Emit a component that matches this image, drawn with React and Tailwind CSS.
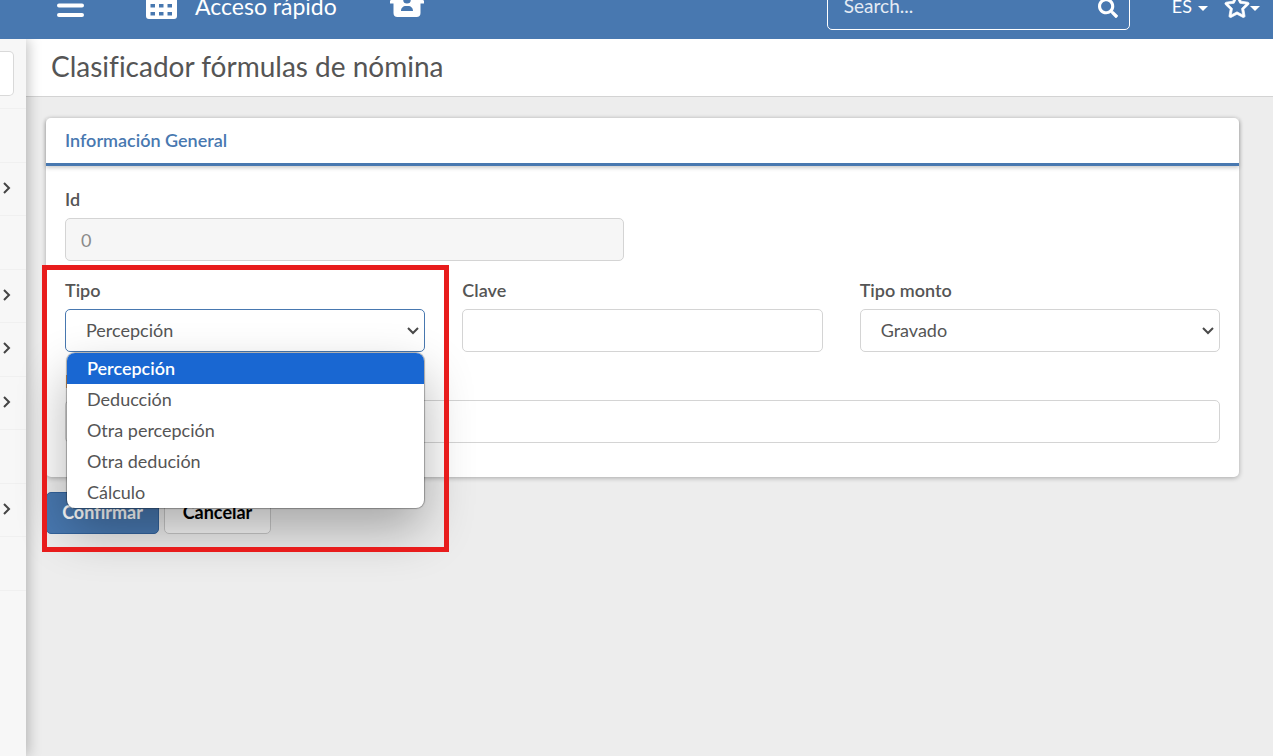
import React from "react";
import { FaSearch, FaRegStar } from "react-icons/fa";

const menuRows = [false, true, false, true, true, true, false, true, false, false];
const tipos = ["Percepción", "Deducción", "Otra percepción", "Otra dedución", "Cálculo"];

const label = "mb-[7px] block text-[18px] leading-6 font-semibold text-[#555]";
const field = "block h-[43px] w-full rounded-[5px] border bg-white text-[18px] text-[#555] outline-none";

function Chevron({ className }) {
  return (
    <svg viewBox="0 0 12 8" className={className} fill="none" stroke="currentColor" strokeWidth="2">
      <path d="M1 1l5 5 5-5" />
    </svg>
  );
}

function Caret() {
  return (
    <svg viewBox="0 0 10 5" className="mt-1 h-[5px] w-2.5" fill="currentColor">
      <path d="M0 0h10L5 5z" />
    </svg>
  );
}

function Select({ id, value, options, active }) {
  return (
    <div className="relative">
      <select
        id={id}
        defaultValue={value}
        className={`${field} appearance-none px-5 ${active ? "border-[#4878b0]" : "border-[#d4d4d4]"}`}
      >
        {options.map((o) => (
          <option key={o}>{o}</option>
        ))}
      </select>
      <Chevron className="pointer-events-none absolute top-[18px] right-1.5 h-2 w-3 text-[#4a4a4a]" />
    </div>
  );
}

function TopBar() {
  return (
    <header className="relative z-20 h-[39px] overflow-hidden bg-[#4878b0] text-white">
      <div className="-mt-[27px] flex h-[66px] items-center pr-[13px] pl-[57px]">
        <button aria-label="Menú" className="mr-[62px]">
          <svg viewBox="0 0 27 24" className="h-6 w-[27px]" stroke="currentColor" strokeWidth="4" strokeLinecap="round">
            <path d="M2 2h23M2 11.500h23M2 21h23" />
          </svg>
        </button>
        <a href="#acceso" className="flex items-center gap-[18px] text-[23px] leading-8">
          <svg viewBox="0 0 31 28" className="h-7 w-[31px]" fill="currentColor" fillRule="evenodd">
            <path d="M3 1h25a3 3 0 0 1 3 3v20a3 3 0 0 1-3 3H3a3 3 0 0 1-3-3V4a3 3 0 0 1 3-3zM4.500 12v3.500h4.500v-3.500zM13 12v3.500h4.500v-3.500zM21.500 12v3.500h4.500v-3.500zM4.500 20v3.500h4.500v-3.500zM13 20v3.500h4.500v-3.500zM21.500 20v3.500h4.500v-3.500z" />
          </svg>
          Acceso rápido
        </a>
        <button aria-label="Portal" className="ml-[53px]">
          <svg viewBox="0 0 34 24" className="h-6 w-[34px]" fill="currentColor" fillRule="evenodd">
            <path d="M5 0h24l5 7v2.500h-3.500V19a4 4 0 0 1-4 4h-19a4 4 0 0 1-4-4V9.500H0V7zM17 2a3.800 3.800 0 1 0 0 7.600 3.800 3.800 0 0 0 0-7.600zM11 17h12c0-3-2-5-5-5h-2c-3 0-5 2-5 5z" />
          </svg>
        </button>
        <div className="ml-auto flex h-12 w-[303px] items-center rounded-[5px] border border-white pr-[11px] pl-4">
          <input
            aria-label="Search"
            placeholder="Search..."
            className="min-w-0 flex-1 bg-transparent text-[19px] outline-none placeholder:text-[#e4ebf4]"
          />
          <FaSearch className="mt-1 size-5" />
        </div>
        <button className="ml-[42px] flex items-center gap-1.5 text-[18px]">
          ES <Caret />
        </button>
        <button aria-label="Favoritos" className="ml-4 flex items-center">
          <FaRegStar className="size-[26px]" stroke="currentColor" strokeWidth="16" />
          <Caret />
        </button>
      </div>
    </header>
  );
}

function Sidebar() {
  return (
    <aside className="relative z-10 w-[26px] shrink-0 bg-[#f7f7f7] pt-3 shadow-[2px_0_14px_rgba(0,0,0,0.25)]">
      <div className="mr-3 h-[45px] rounded-r-[5px] border border-l-0 border-[#d9d9d9] bg-white" />
      <nav className="mt-3 flex h-[535px] flex-col">
        {menuRows.map((open, i) => (
          <a
            key={i}
            href="#menu"
            aria-label="Sección"
            className="flex flex-1 items-center border-t border-[#f0f0f0] pb-0.5 pl-[3px] text-[#444]"
          >
            {open && (
              <svg viewBox="0 0 8 12" className="h-3 w-2" fill="none" stroke="currentColor" strokeWidth="2">
                <path d="M1 1l5 5-5 5" />
              </svg>
            )}
          </a>
        ))}
      </nav>
    </aside>
  );
}

function TipoField() {
  return (
    <div className="relative">
      <label htmlFor="tipo" className={label}>Tipo</label>
      <Select id="tipo" value="Percepción" options={tipos} active />
      <ul
        role="listbox"
        aria-label="Tipo"
        className="absolute top-full right-px left-0.5 z-10 mt-px overflow-hidden rounded-lg bg-white text-[18px] leading-[31px] text-[#555] shadow-[0_0_1px_1px_rgba(0,0,0,0.3),0_22px_50px_rgba(0,0,0,0.3)]"
      >
        {tipos.map((t, i) => (
          <li
            key={t}
            role="option"
            aria-selected={i === 0}
            className={i === 0 ? "bg-[#1967d2] px-5 font-semibold text-white" : "px-5"}
          >
            {t}
          </li>
        ))}
      </ul>
      <div className="pointer-events-none absolute -top-[13px] -right-6 -left-[23px] z-20 h-[287px] border-5 border-[#e81c1c]" />
    </div>
  );
}

export default function App() {
  return (
    <div className="flex min-h-screen flex-col bg-[#ededed] font-['Lato',sans-serif] [font-variant-ligatures:none]">
      <TopBar />
      <div className="flex flex-1">
        <Sidebar />
        <main className="min-w-0 flex-1">
          <h1 className="border-b border-[#d3d3d3] bg-white pt-[7px] pb-2.5 pl-[25px] text-[28px] leading-10 text-[#555]">
            Clasificador fórmulas de nómina
          </h1>
          <form className="pt-[21px] pr-[34px] pl-5">
            <section className="rounded-[5px] bg-white shadow-[0_1px_5px_rgba(0,0,0,0.3)]">
              <h2 className="border-b-3 border-[#4878b0] px-[19px] pt-2.5 pb-[11px] text-[18px] leading-6 font-semibold text-[#4878b0] shadow-[0_2px_4px_rgba(0,0,0,0.2)]">
                Información General
              </h2>
              <div className="flex flex-col gap-[17px] px-[19px] pt-[21px] pb-[34px]">
                <div className="grid grid-cols-2 gap-[37px]">
                  <div>
                    <label htmlFor="id" className={label}>Id</label>
                    <input id="id" defaultValue="0" disabled className="block h-[43px] w-full rounded-[5px] border border-[#d4d4d4] bg-[#f6f6f6] px-[15px] text-[18px] text-[#8a8a8a]" />
                  </div>
                </div>
                <div className="grid grid-cols-3 gap-[37px]">
                  <TipoField />
                  <div>
                    <label htmlFor="clave" className={label}>Clave</label>
                    <input id="clave" className={`${field} border-[#d4d4d4] px-[15px]`} />
                  </div>
                  <div>
                    <label htmlFor="monto" className={label}>Tipo monto</label>
                    <Select id="monto" value="Gravado" options={["Gravado", "Exento"]} />
                  </div>
                </div>
                <div>
                  <label htmlFor="descripcion" className={label}>Descripción</label>
                  <input id="descripcion" className={`${field} border-[#d4d4d4] px-[15px]`} />
                </div>
              </div>
            </section>
            <div className="mt-[15px] flex gap-[5px] text-[18px] font-bold">
              <button type="button" className="h-[42px] w-[113px] rounded-[5px] border border-[#33639c] bg-[#4878b0] pb-0.5 text-white">
                Confirmar
              </button>
              <button type="button" className="h-[42px] w-[107px] rounded-[5px] border border-[#c8c8c8] bg-[#f8f8f8] pb-0.5 text-black">
                Cancelar
              </button>
            </div>
          </form>
        </main>
      </div>
    </div>
  );
}
